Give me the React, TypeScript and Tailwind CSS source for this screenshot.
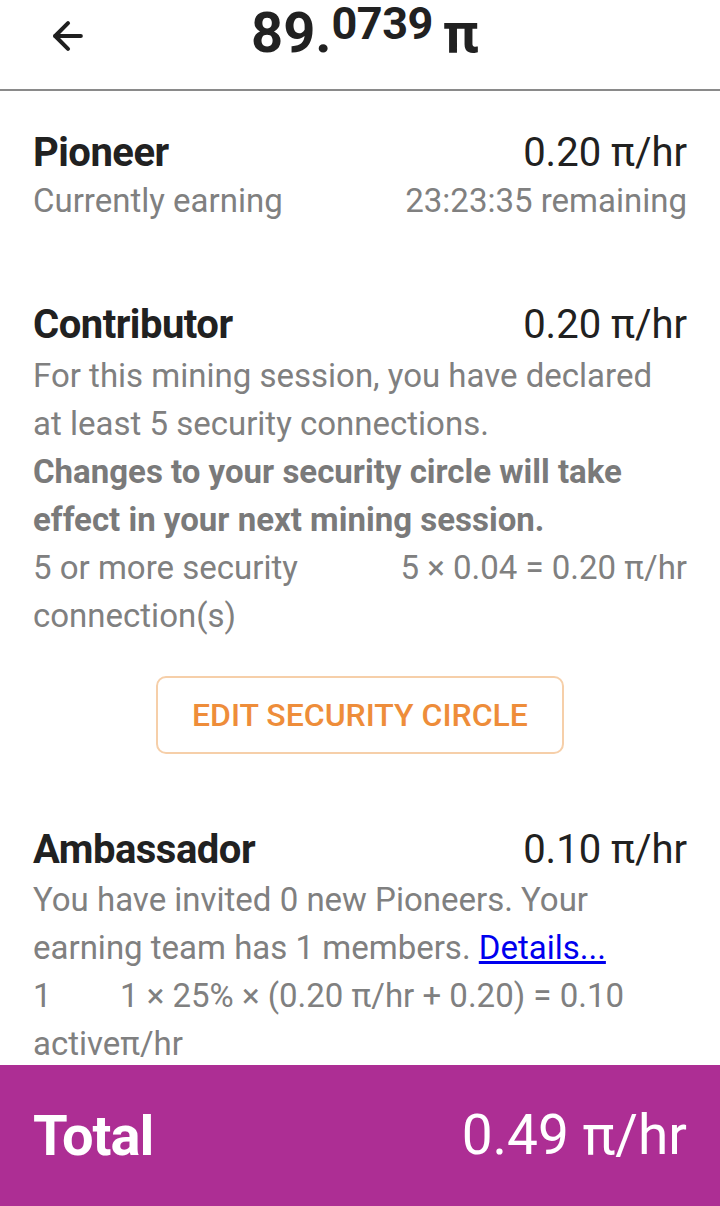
import { ArrowLeft } from 'lucide-react';

// Mining rate breakdown screen
function RateTitle({ name, rate }: { name: string; rate: string }) {
    return (
        <div className="flex items-center justify-between h-[48px]">
            <div className="text-[40px] font-bold tracking-[-0.5px] text-[#212121]">{name}</div>
            <div className="text-[40px] text-[#212121]">{rate}</div>
        </div>
    );
}

export default function App() {
    return (
        <div
            className="flex flex-col h-[1206px] w-[720px] bg-white overflow-hidden"
            style={{ fontFamily: 'Roboto, "Noto Sans", sans-serif' }}
        >
            {/* Header with balance */}
            <header className="grid grid-cols-[120px_1fr_120px] items-center h-[91px] border-b-2 border-[#8a8a8a] shrink-0">
                <div className="flex items-start h-full pt-[14px] pl-[46px]">
                    <ArrowLeft size={44} strokeWidth={2.2} color="#1f1f1f" />
                </div>
                <div className="flex justify-center items-start h-full pl-[10px] text-[#212121] font-bold leading-none">
                    <span className="text-[56px] leading-[66px]">89.</span>
                    <span className="text-[45px] leading-[46px] mt-[1px] tracking-[-0.5px]">0739</span>
                    <span className="text-[56px] leading-[66px] ml-[10px]">π</span>
                </div>
                <div />
            </header>

            {/* Scrollable content */}
            <main className="flex-1 overflow-hidden px-[33px] pt-[38px] text-[33px] leading-[48px] text-[#808080]">
                <section>
                    <RateTitle name="Pioneer" rate="0.20 π/hr" />
                    <div className="flex justify-between">
                        <span>Currently earning</span>
                        <span>23:23:35 remaining</span>
                    </div>
                </section>

                <section className="mt-[76px]">
                    <RateTitle name="Contributor" rate="0.20 π/hr" />
                    <p className="mt-[3px]">For this mining session, you have declared at least 5 security connections.</p>
                    <p className="font-bold text-[#7a7a7a]">
                        Changes to your security circle will take effect in your next mining session.
                    </p>
                    <div className="grid grid-cols-2">
                        <span>5 or more security connection(s)</span>
                        <span className="text-right">5 × 0.04 = 0.20 π/hr</span>
                    </div>
                    <div className="flex justify-center mt-[36px]">
                        <button className="w-[408px] h-[78px] rounded-[10px] border-2 border-[#f6cfa9] text-[#ee8d3a] text-[32px] leading-none font-medium">
                            EDIT SECURITY CIRCLE
                        </button>
                    </div>
                </section>

                <section className="mt-[72px]">
                    <RateTitle name="Ambassador" rate="0.10 π/hr" />
                    <p className="mt-[2px]">
                        You have invited 0 new Pioneers. Your earning team has 1 members.{' '}
                        <a href="#" className="text-[#0000ee] underline">Details...</a>
                    </p>
                    <div className="flex">
                        <span className="w-[87px]">1</span>
                        <span>1 × 25% × (0.20 π/hr + 0.20) = 0.10</span>
                    </div>
                    <div>activeπ/hr</div>
                </section>
            </main>

            {/* Total bar */}
            <footer className="flex items-center justify-between h-[141px] shrink-0 bg-[#ad2e94] px-[33px] text-white">
                <span className="text-[56px] font-bold tracking-[-1px]">Total</span>
                <span className="text-[55px]">0.49 π/hr</span>
            </footer>
        </div>
    );
}
